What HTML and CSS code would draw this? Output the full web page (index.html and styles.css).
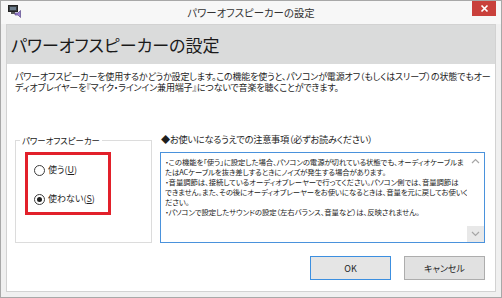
FILE: index.html
```html
<!DOCTYPE html>
<html lang="ja">
<head>
    <meta charset="UTF-8">
    <title>パワーオフスピーカーの設定</title>
    <link rel="stylesheet" href="styles.css">
</head>
<body>
    <div class="window">
        <div class="titlebar">
            <svg class="app-icon" width="13" height="13" viewBox="0 0 13 13">
                <rect x="0.5" y="0.5" width="9" height="6" fill="#3a3f44" stroke="#222" stroke-width="1"/>
                <rect x="2" y="2" width="6" height="3" fill="#6b7c8c"/>
                <rect x="3" y="7" width="4" height="2" fill="#555"/>
                <path d="M7 8 L10 8 L12.5 5.5 L12.5 12.5 L10 10 L7 10 Z" fill="#9a7fd0" stroke="#5b4a8a" stroke-width="0.7"/>
            </svg>
            <div class="title-text">パワーオフスピーカーの設定</div>
            <div class="close-btn">
                <svg width="9" height="9" viewBox="0 0 9 9">
                    <path d="M1.5 1.5 L7.5 7.5 M7.5 1.5 L1.5 7.5" stroke="#fff" stroke-width="1.7"/>
                </svg>
            </div>
        </div>

        <div class="client">
            <div class="header">
                <h1>パワーオフスピーカーの設定</h1>
            </div>

            <div class="content">
                <p class="description">
                    パワーオフスピーカーを使用するかどうか設定します。この機能を使うと、パソコンが電源オフ（もしくはスリープ）の状態でもオー<br>ディオプレイヤーを『マイク・ラインイン兼用端子』につないで音楽を聴くことができます。
                </p>

                <div class="settings-row">
                    <fieldset class="group">
                        <legend>パワーオフスピーカー</legend>
                        <div class="highlight">
                            <label class="radio-row">
                                <span class="radio"></span>
                                <span>使う(<u>U</u>)</span>
                            </label>
                            <label class="radio-row">
                                <span class="radio checked"></span>
                                <span>使わない(<u>S</u>)</span>
                            </label>
                        </div>
                    </fieldset>

                    <div class="notes">
                        <div class="notes-title">◆お使いになるうえでの注意事項（必ずお読みください）</div>
                        <div class="notes-box">
                            <div class="notes-text">
                                ・この機能を「使う」に設定した場合、パソコンの電源が切れている状態でも、オーディオケーブルま<br>たはACケーブルを抜き差しするときにノイズが発生する場合があります。<br>・音量調節は、接続しているオーディオプレーヤーで行ってください。パソコン側では、音量調節は<br>できません。また、その後にオーディオプレーヤーをお使いになるときは、音量を元に戻してお使いく<br>ださい。<br>・パソコンで設定したサウンドの設定（左右バランス、音量など）は、反映されません。
                            </div>
                            <div class="scrollbar">
                                <div class="scroll-arrow">
                                    <svg width="9" height="6" viewBox="0 0 9 6"><path d="M1 5 L4.5 1.5 L8 5" fill="none" stroke="#a6a6a6" stroke-width="1.2"/></svg>
                                </div>
                                <div class="scroll-arrow down">
                                    <svg width="9" height="6" viewBox="0 0 9 6"><path d="M1 1 L4.5 4.5 L8 1" fill="none" stroke="#a6a6a6" stroke-width="1.2"/></svg>
                                </div>
                            </div>
                        </div>
                    </div>
                </div>

                <div class="button-row">
                    <button class="btn default">OK</button>
                    <button class="btn">キャンセル</button>
                </div>
            </div>
        </div>
    </div>
</body>
</html>
```

FILE: styles.css
```css
* {
    margin: 0;
    padding: 0;
    box-sizing: border-box;
}

body {
    font-family: "Noto Sans CJK JP", "Noto Sans", sans-serif;
    font-feature-settings: "palt";
    background: #ffffff;
    color: #1e1e1e;
    width: 502px;
    height: 298px;
    overflow: hidden;
}

.window {
    width: 502px;
    height: 298px;
    border: 1px solid #a8a8a8;
    background: #f0f0f0;
    display: flex;
    flex-direction: column;
}

.titlebar {
    height: 23px;
    background: #f7f7f7;
    display: flex;
    align-items: flex-start;
    position: relative;
}

.app-icon {
    margin: 4px 0 0 7px;
}

.title-text {
    position: absolute;
    left: 0;
    right: 0;
    top: 4px;
    text-align: center;
    font-size: 10.4px;
    line-height: 16px;
    color: #333333;
}

.close-btn {
    margin-left: auto;
    margin-right: 5px;
    width: 24px;
    height: 15px;
    background: #c9403b;
    display: flex;
    align-items: center;
    justify-content: center;
    position: relative;
}

.client {
    flex: 1;
    margin: 0 5px 5px;
    border: 1px solid #d2d2d2;
    background: #ffffff;
    display: flex;
    flex-direction: column;
}

.header {
    height: 39px;
    background: #dadbdb;
    display: flex;
    align-items: center;
    padding-left: 4px;
}

.header h1 {
    font-size: 17px;
    font-weight: 400;
    line-height: 22px;
    color: #1a1a1a;
    white-space: nowrap;
}

.content {
    padding: 7px 10px 0 8px;
    display: flex;
    flex-direction: column;
}

.description {
    height: 22px;
    font-size: 9px;
    letter-spacing: -0.15px;
    line-height: 11px;
    white-space: nowrap;
    color: #1c1c1c;
}

.settings-row {
    display: flex;
    gap: 8px;
    margin-top: 40px;
}

.group {
    width: 138px;
    border: 1px solid #dcdcdc;
    padding: 0 4px;
}

.group legend {
    font-size: 8.4px;
    line-height: 14px;
    padding: 0 2px;
    color: #222222;
}

.highlight {
    margin: 5px 0 0 5px;
    width: 86px;
    height: 63px;
    border: 3px solid #e2202a;
    padding: 9px 0 0 6px;
    display: flex;
    flex-direction: column;
    gap: 17px;
}

.radio-row {
    display: flex;
    align-items: center;
    gap: 3px;
    font-size: 9px;
    line-height: 12px;
    white-space: nowrap;
    color: #1e1e1e;
}

.radio {
    width: 11px;
    height: 11px;
    border: 1px solid #3c3c3c;
    border-radius: 50%;
    background: #ffffff;
    display: flex;
    align-items: center;
    justify-content: center;
}

.radio.checked::after {
    content: "";
    width: 5px;
    height: 5px;
    border-radius: 50%;
    background: #1e1e1e;
}

.notes {
    width: 325px;
    display: flex;
    flex-direction: column;
}

.notes-title {
    font-size: 9.2px;
    letter-spacing: -0.25px;
    line-height: 12px;
    white-space: nowrap;
    color: #1e1e1e;
    padding-left: 1px;
}

.notes-box {
    margin-top: 7px;
    height: 91px;
    border: 1px solid #4a92dc;
    display: flex;
}

.notes-text {
    flex: 1;
    padding: 4px 0 0 4px;
    font-size: 7.4px;
    letter-spacing: -0.1px;
    line-height: 10px;
    white-space: nowrap;
    color: #222222;
    overflow: hidden;
}

.scrollbar {
    width: 17px;
    display: flex;
    flex-direction: column;
    justify-content: space-between;
}

.scroll-arrow {
    height: 16px;
    display: flex;
    align-items: center;
    justify-content: center;
}

.scroll-arrow.down {
    background: #e8e8e8;
}

.button-row {
    display: flex;
    justify-content: flex-end;
    gap: 13px;
    margin-top: 13px;
}

.btn {
    width: 81px;
    height: 24px;
    font-family: inherit;
    font-feature-settings: "palt";
    font-size: 9px;
    color: #1e1e1e;
    background: #e1e1e1;
    border: 1px solid #adadad;
}

.btn.default {
    border-color: #3c8fe0;
    background: #e5e5e5;
}
```
